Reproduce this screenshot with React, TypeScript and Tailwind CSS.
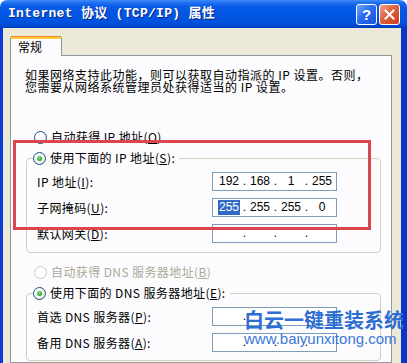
import React from "react";

const cjk = "font-['Noto_Sans_CJK_SC','Noto_Sans',sans-serif]";

function Radio({ checked, disabled }: { checked?: boolean; disabled?: boolean }) {
  return (
    <span
      className={
        "flex h-[13px] w-[13px] shrink-0 items-center justify-center rounded-full border " +
        (disabled
          ? "border-[#cac8bb] bg-white"
          : "border-[#1c5180] bg-[radial-gradient(circle_at_35%_35%,#ffffff_30%,#dcdcd4_100%)]")
      }
    >
      {checked && (
        <span className="h-[5px] w-[5px] rounded-full bg-[radial-gradient(circle_at_40%_40%,#7de27d_0%,#21a121_70%,#1a7f1a_100%)]" />
      )}
    </span>
  );
}

function IpBox({ vals, highlight }: { vals: string[]; highlight?: boolean }) {
  return (
    <div className="flex h-[19px] w-[125px] items-center border border-[#7f9db9] bg-white pl-[6px] font-['Liberation_Sans',sans-serif] text-[12px] text-black">
      {vals.map((v, i) => (
        <React.Fragment key={i}>
          <span className="flex w-[20px] justify-center">
            {i === 0 && highlight ? (
              <span className="bg-[#316ac5] px-[1px] leading-[15px] text-white">{v}</span>
            ) : (
              <span className="leading-[15px]">{v}</span>
            )}
          </span>
          {i < 3 && <span className="w-[11px] text-center leading-[15px]">.</span>}
        </React.Fragment>
      ))}
    </div>
  );
}

function Row({ label, children }: { label: React.ReactNode; children: React.ReactNode }) {
  return (
    <div className="flex h-[19px] items-center">
      <span className="w-[185px] pl-[10px] whitespace-pre tracking-[0.4px]">{label}</span>
      {children}
    </div>
  );
}

export default function App() {
  return (
    <div className={"relative h-[363px] w-[407px] overflow-hidden bg-white text-[12px] text-black " + cjk}>
      {/* Title bar */}
      <div className="flex h-[28px] items-center rounded-t-[7px] bg-[linear-gradient(to_bottom,#3d8cf8_0%,#1f6ff0_10%,#0a5ce6_22%,#0056e3_50%,#0053df_80%,#0048cf_92%,#003bb6_100%)] pl-[8px] pr-[7px]">
        <span className="flex-1 whitespace-pre font-['Liberation_Mono','Noto_Sans_CJK_SC',monospace] text-[13px] font-bold leading-[16px] tracking-[0.3px] text-white [text-shadow:1px_1px_0_#0a2a8c]">
          Internet 协议 (TCP/IP) 属性
        </span>
        <div className="flex gap-[2px]">
          <div className="flex h-[21px] w-[21px] items-center justify-center rounded-[3px] border border-white bg-[linear-gradient(135deg,#6fa4ff_0%,#2a6cf0_45%,#1b53d8_100%)] font-['Liberation_Sans',sans-serif] text-[15px] font-bold leading-none text-white">
            ?
          </div>
          <div className="flex h-[21px] w-[21px] items-center justify-center rounded-[3px] border border-white bg-[linear-gradient(135deg,#f1a38a_0%,#e0603d_45%,#c7401f_100%)]">
            <svg width="11" height="11" viewBox="0 0 11 11">
              <path d="M1.5 1.5 L9.5 9.5 M9.5 1.5 L1.5 9.5" stroke="#ffffff" strokeWidth="2" strokeLinecap="square" />
            </svg>
          </div>
        </div>
      </div>

      {/* Body */}
      <div className="flex h-[335px] flex-col border-l-[3px] border-r-[6px] border-l-[#0a3bd6] border-r-[#0a36c8] bg-[#ece9d8] pl-[7px] pr-[9px] pt-[8px]">
        {/* Tab */}
        <div className="relative z-10 -mb-[1px] flex h-[20px] w-[52px] flex-col rounded-t-[3px] border-x border-[#919b9c] bg-[#fcfcfe]">
          <div className="h-[1px] bg-[#e68b2c]" />
          <div className="h-[2px] bg-[#ffc73c]" />
          <div className="pl-[7px] pt-[1px] leading-[14px]">常规</div>
        </div>

        {/* Panel */}
        <div className="flex flex-1 flex-col border border-[#919b9c] bg-[#fcfcfe]">
          <div className="mt-[13px] pl-[14px] leading-[12px] whitespace-pre tracking-[0.5px]">
            <div>如果网络支持此功能，则可以获取自动指派的 IP 设置。否则，</div>
            <div>您需要从网络系统管理员处获得适当的 IP 设置。</div>
          </div>

          <div className="mt-[37px] flex h-[14px] items-center pl-[23px]">
            <Radio />
            <span className="ml-[4px] whitespace-pre leading-[14px] tracking-[0.4px]">
              自动获得 IP 地址(<u>O</u>)
            </span>
          </div>

          {/* Group 1 */}
          <div className="mb-0 ml-[15px] mr-[10px] mt-[14px] flex flex-col rounded-[4px] border border-[#d0d0bf] pb-[9px]">
            <div className="-mt-[8px] ml-[6px] flex h-[14px] items-center self-start bg-[#fcfcfe] pr-[4px]">
              <Radio checked />
              <span className="ml-[4px] whitespace-pre leading-[14px] tracking-[0.4px]">
                使用下面的 IP 地址(<u>S</u>):
              </span>
            </div>
            <div className="mt-[7px] flex flex-col gap-[7px]">
              <Row label={<>IP 地址(<u>I</u>):</>}>
                <IpBox vals={["192", "168", "1", "255"]} />
              </Row>
              <Row label={<>子网掩码(<u>U</u>):</>}>
                <IpBox vals={["255", "255", "255", "0"]} highlight />
              </Row>
              <Row label={<>默认网关(<u>D</u>):</>}>
                <IpBox vals={["", "", "", ""]} />
              </Row>
            </div>
          </div>

          <div className="mt-[12px] flex h-[14px] items-center pl-[23px]">
            <Radio disabled />
            <span className="ml-[4px] whitespace-pre leading-[14px] tracking-[0.4px] text-[#aca899]">
              自动获得 DNS 服务器地址(<u>B</u>)
            </span>
          </div>

          {/* Group 2 */}
          <div className="ml-[15px] mr-[10px] mt-[14px] flex flex-col rounded-[4px] border border-[#d0d0bf] pb-[8px]">
            <div className="-mt-[8px] ml-[6px] flex h-[14px] items-center self-start bg-[#fcfcfe] pr-[4px]">
              <Radio checked />
              <span className="ml-[4px] whitespace-pre leading-[14px] tracking-[0.4px]">
                使用下面的 DNS 服务器地址(<u>E</u>):
              </span>
            </div>
            <div className="mt-[7px] flex flex-col gap-[7px]">
              <Row label={<>首选 DNS 服务器(<u>P</u>):</>}>
                <IpBox vals={["", "", "", ""]} />
              </Row>
              <Row label={<>备用 DNS 服务器(<u>A</u>):</>}>
                <IpBox vals={["", "", "", ""]} />
              </Row>
            </div>
          </div>
        </div>
      </div>

      {/* Red annotation box */}
      <div className="pointer-events-none absolute left-[13px] top-[140px] h-[90px] w-[358px] border-[3px] border-[#db464d]" />

      {/* Watermark */}
      <div className="pointer-events-none absolute left-[244px] top-[309px] flex flex-col">
        <span className="whitespace-pre text-[20px] font-semibold leading-[22px] text-[#2d6ed3]">白云一键重装系统</span>
        <span className="whitespace-pre font-['Liberation_Sans',sans-serif] text-[15px] leading-[16px] text-[#3a78d6]">
          www.baiyunxitong.com
        </span>
      </div>
    </div>
  );
}
